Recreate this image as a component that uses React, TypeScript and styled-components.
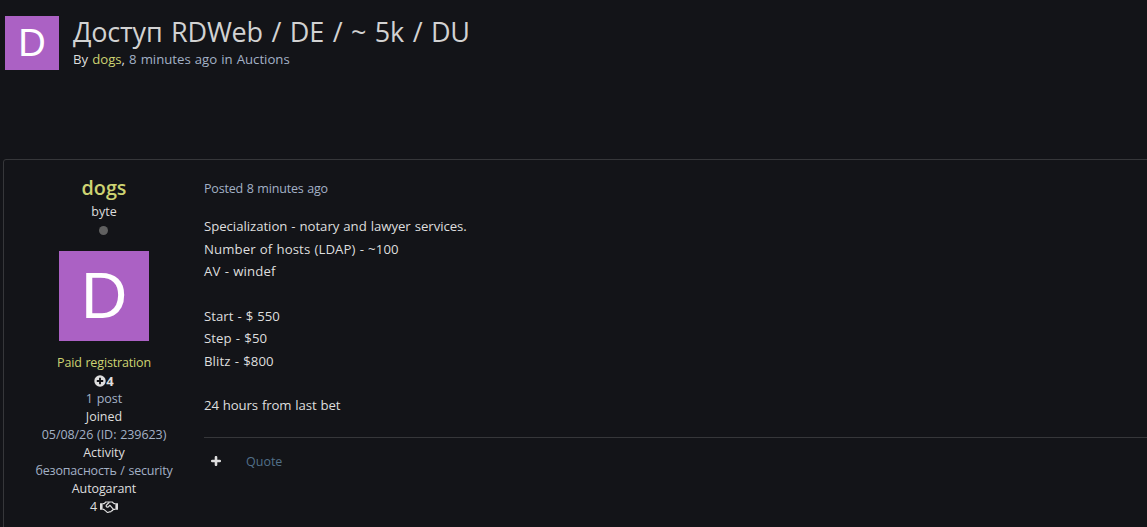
import styled, { createGlobalStyle } from 'styled-components'

const Color = {
    background: '#131418',
    border: '#36373a',
    text: '#dedede',
    muted: '#a3b1c6',
    user: '#cdd372',
    link: '#527089',
    avatar: '#ab61c4',
}

const GlobalStyle = createGlobalStyle`
    * {
      box-sizing: border-box;
    }

    body {
      margin: 0;
      overflow: hidden;
      background: ${Color.background};
      color: ${Color.text};
      font-family: 'Open Sans', 'Noto Sans', sans-serif;
      font-size: 12.5px;
      line-height: 18px;
      word-spacing: 0.6px;
    }
`

const Page = styled.main`
    display: flex;
    flex-direction: column;
    height: 527px;
    padding-left: 3px;
    overflow: hidden;
`

const Header = styled.header`
    display: flex;
    flex: none;
    gap: 14px;
    height: 159px;
    padding: 16px 0 0 2px;
`

const Avatar = styled.div<{ $size: number; $font: number }>`
    flex: none;
    width: ${(p) => p.$size}px;
    height: ${(p) => p.$size}px;

    font-family: 'Liberation Sans', sans-serif;
    font-size: ${(p) => p.$font}px;
    line-height: ${(p) => p.$size}px;
    text-align: center;
    color: #fff;
    background: ${Color.avatar};
`

const Title = styled.h1`
    margin: 0;
    padding-bottom: 2px;

    font-size: 27px;
    font-weight: 400;
    line-height: 32px;
    letter-spacing: -0.2px;
    word-spacing: 1.8px;
    white-space: nowrap;
    color: #d2d2d2;
`

const Meta = styled.p`
    margin: 0;

    font-size: 13.2px;
    line-height: 19px;
    color: ${Color.muted};
`

const Text = styled.span<{ $color?: string; $track?: number }>`
    color: ${(p) => p.$color || Color.text};
    letter-spacing: ${(p) => p.$track || 0}px;
    white-space: nowrap;
`

const Topic = styled.article`
    display: flex;
    flex: none;
    width: 1160px;
    height: 400px;

    border: solid 1px ${Color.border};
    border-radius: 3px;
`

const Author = styled.aside`
    display: flex;
    flex-direction: column;
    align-items: center;
    width: 200px;
    padding-top: 14px;
`

const Name = styled.h3`
    margin: 0 0 1px;

    font-size: 19.8px;
    font-weight: 600;
    line-height: 28px;
    color: ${Color.user};
`

const Status = styled.span`
    width: 9px;
    height: 9px;
    margin: 5px 2px 16px 0;

    border-radius: 50%;
    background: #606060;
`

const Details = styled.div`
    display: flex;
    flex-direction: column;
    align-items: center;
    padding-top: 13px;
`

const Badge = styled.span<{ $gap?: number; $bold?: boolean }>`
    display: flex;
    align-items: center;
    gap: ${(p) => p.$gap || 0}px;
    height: 18px;
    padding-bottom: ${(p) => (p.$bold ? 1 : 0)}px;

    font-size: ${(p) => (p.$bold ? 13 : 12.5)}px;
    font-weight: ${(p) => (p.$bold ? 700 : 400)};
`

const Post = styled.section`
    flex: 1;
    padding-top: 20px;
`

const Body = styled.div`
    display: flex;
    flex-direction: column;
    height: 239px;
    padding-top: 17.3px;

    font-size: 13.2px;
    line-height: 22.4px;
`

const Line = styled(Text)`
    height: 22.4px;
`

const Actions = styled.footer`
    display: flex;
    align-items: flex-start;
    gap: 25px;
    height: 47px;
    padding: 15px 0 0 7px;

    border-top: solid 1px ${Color.border};
`

const PlusIcon = styled.svg`
    width: 10px;
    height: 10px;
    margin-top: 3px;
`

const lines = [
    { text: 'Specialization - notary and lawyer services.', track: -0.04 },
    { text: 'Number of hosts (LDAP) - ~100', track: 0.1 },
    { text: 'AV - windef', track: 0.15 },
    { text: '', track: 0 },
    { text: 'Start - $ 550', track: 0 },
    { text: 'Step - $50', track: 0.08 },
    { text: 'Blitz - $800', track: 0.1 },
    { text: '', track: 0 },
    { text: '24 hours from last bet', track: -0.11 },
]

const Handshake = () => (
  <svg width="18" height="12" viewBox="0 0 18 12" fill="none" stroke="currentColor" strokeLinejoin="round">
    <path d="M0 2.2h2.6v6.6H0zM15.4 2.2H18v6.6h-2.6z" fill="currentColor" stroke="none" />
    <path d="M2.6 2.6h1.6L5.8 1h6.4l1.8 1.6h1.4M2.6 8.4h1.2l3 2.5c.8.6 1.8.5 2.4-.1 1 .3 1.8-.1 2.2-.9.9 0 1.6-.6 1.7-1.5h2.3" strokeWidth="1.2" />
    <path d="M9.4 1.2 6.5 4c-.5.6-.4 1.3.1 1.7.6.5 1.3.4 1.8 0L10 4.3l3.2 3.9" strokeWidth="1.2" />
  </svg>
)

export default function App() {
  return (
    <>
      <GlobalStyle />
      <Page>
        <Header>
          <Avatar $size={54} $font={38}>D</Avatar>
          <div>
            <Title>Доступ RDWeb / DE / ~ 5k / DU</Title>
            <Meta>
              <Text>By </Text>
              <Text $color={Color.user}>dogs</Text>
              <Text>, </Text>
              8 minutes ago in Auctions
            </Meta>
          </div>
        </Header>

        <Topic>
          <Author>
            <Name>dogs</Name>
            <Text>byte</Text>
            <Status />
            <Avatar $size={90} $font={64}>D</Avatar>
            <Details>
              <Text $color={Color.user} $track={-0.15}>Paid registration</Text>
              <Badge $bold>
                <svg width="12" height="12" viewBox="0 0 12 12">
                  <circle cx="6" cy="6" r="5.7" fill="currentColor" />
                  <path d="M6 2.8v6.4M2.8 6h6.4" stroke={Color.background} strokeWidth="1.9" />
                </svg>
                4
              </Badge>
              <Text $color={Color.muted}>1 post</Text>
              <Text>Joined</Text>
              <Text $color={Color.muted} $track={-0.06}>05/08/26 (ID: 239623)</Text>
              <Text>Activity</Text>
              <Text $color={Color.muted} $track={-0.18}>безопасность / security</Text>
              <Text $track={-0.1}>Autogarant</Text>
              <Badge $gap={3}>
                4 <Handshake />
              </Badge>
            </Details>
          </Author>

          <Post>
            <Text $color={Color.muted} $track={-0.18}>Posted 8 minutes ago</Text>
            <Body>
              {lines.map((line, i) => (
                <Line key={i} $track={line.track}>{line.text}</Line>
              ))}
            </Body>
            <Actions>
              <PlusIcon viewBox="0 0 10 10">
                <path d="M5 1.2v7.6M1.2 5h7.6" stroke="currentColor" strokeWidth="2.6" strokeLinecap="round" />
              </PlusIcon>
              <Text $color={Color.link}>Quote</Text>
            </Actions>
          </Post>
        </Topic>
      </Page>
    </>
  )
}
